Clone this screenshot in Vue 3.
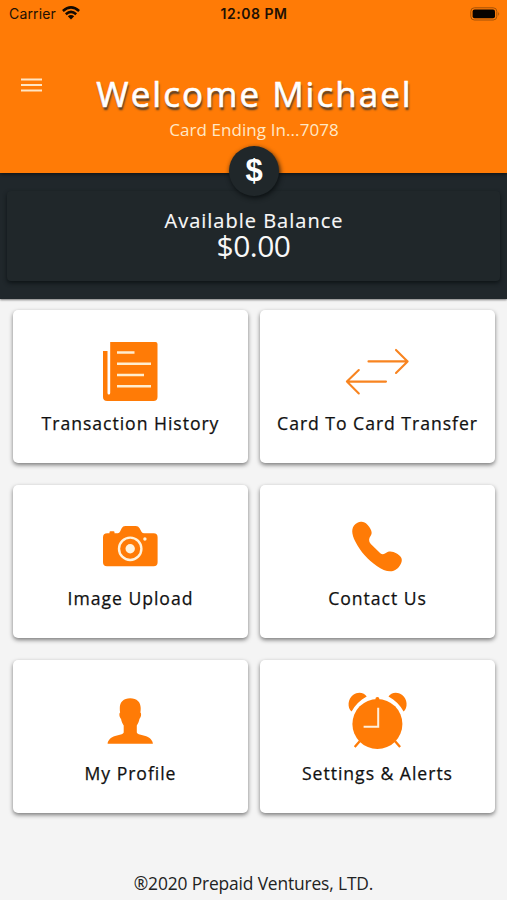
<script setup>
const tiles = [
  { id: 'history', label: 'Transaction History' },
  { id: 'transfer', label: 'Card To Card Transfer' },
  { id: 'camera', label: 'Image Upload' },
  { id: 'phone', label: 'Contact Us' },
  { id: 'profile', label: 'My Profile' },
  { id: 'alarm', label: 'Settings & Alerts' },
]
</script>

<template>
  <div class="screen">
    <header class="header">
      <div class="status">
        <div class="carrier">
          <span>Carrier</span>
          <svg class="wifi" width="18" height="14" viewBox="0 0 18 14">
            <g fill="none" stroke="#130a02" stroke-width="2.5">
              <path d="M.9 5Q9-2.2 17.1 5" />
              <path d="M3.8 8.200Q9 3.600 14.200 8.200" />
            </g>
            <path d="M5.800 10.300Q9 7.600 12.200 10.300L9 13.600Z" fill="#130a02" />
          </svg>
        </div>
        <span class="time">12:08 PM</span>
        <svg class="battery" width="31" height="14" viewBox="0 0 31 14">
          <rect x=".8" y=".8" width="26" height="12.2" rx="3.6" fill="none" stroke="#a45208" />
          <rect x="2.6" y="2.5" width="22.4" height="8.8" rx="2" fill="#090300" />
          <path d="M28.3 4.8q1.800 2.100 0 4.200z" fill="#9a4c06" />
        </svg>
      </div>
      <div class="welcome">
        <svg class="menu" width="21" height="14" viewBox="0 0 21 14">
          <path d="M0 1.500h21M0 7h21M0 12.500h21" stroke="#ffe5c4" stroke-width="2.100" />
        </svg>
        <h1>Welcome Michael</h1>
      </div>
      <p class="ending">Card Ending In...7078</p>
      <div class="dollar">$</div>
    </header>

    <section class="balance">
      <div class="panel">
        <span class="balance-label">Available Balance</span>
        <span class="amount">$0.00</span>
      </div>
    </section>

    <main class="grid">
      <div v-for="tile in tiles" :key="tile.id" class="tile">
        <svg class="icon" width="80" height="80" viewBox="0 0 80 80">
          <template v-if="tile.id === 'history'">
            <path d="M20.200 12H65.500q2 0 2 2v53q0 4-4 4H17.200q-4.200 0-4.200-4V21h4.500v42q0 1.500 1.350 1.500t1.350-1.500Z" fill="#ff7b06" />
            <path d="M27 22.500h17.500M27 33.800h34M27 45h27M27 56.300h34" stroke="#ffedcf" stroke-width="2.400" />
          </template>
          <g v-else-if="tile.id === 'transfer'" fill="none" stroke="#f88420" stroke-width="2.100" stroke-linecap="round" stroke-linejoin="round">
            <path d="M31.500 31.400h39.100M59 19.900l11.600 11.500L59 43M49 51.600H9.900M21.800 40 9.900 51.600l11.900 11.800" />
          </g>
          <template v-else-if="tile.id === 'camera'">
            <path d="M17.300 28.200h2.200v-1q0-1 1-1h3q1 0 1 1v1h3.300q1.500 0 2.300-1.600l1.600-3.300Q32.800 21 35.300 21h10.500q2.500 0 3.800 2.300l1.700 3.300q.8 1.600 2.500 1.600h9.800q4 0 4 4v25q0 4.100-4 4.100H17q-4 0-4-4.100v-25q0-4 4.300-4Z" fill="#ff7b06" />
            <circle cx="40.200" cy="43.800" r="11.200" fill="none" stroke="#fff2dc" stroke-width="2.400" />
            <circle cx="40.200" cy="43.800" r="4.700" fill="#fff2dc" />
            <circle cx="54.900" cy="34" r="1.700" fill="#fff2dc" />
          </template>
          <path v-else-if="tile.id === 'phone'" d="M23.800 16.700C27.500 16.200 30 18.500 32.300 22c2.200 3.500 3.300 6 1.400 8.700-2 2.600-2.300 5.400.1 8.300l9.500 9.300c1.500 1.200 3 1.400 4.700.2 3.300-2.800 7.500-2.600 11.700.1 3.300 2.200 6 4.600 4.900 8.200-1.300 4.700-5 8.700-9.600 9.400-4.800.7-9.700-1.600-15.200-5.300C31 55.100 23.500 46.600 18.300 36.500c-3.900-7.500-4.300-13.600.2-17.400 1.500-1.300 3.300-2.200 5.300-2.400Z" fill="#ff7b06" />
          <path v-else-if="tile.id === 'profile'" d="M40.200 18.200c6.700 0 10.500 3.800 10.500 9.800 0 1.500 0 3-.3 4.500 1.300.7.700 5-.9 6.300-.5 2.900-1.500 4.900-2.700 6.700v7q.4 1.200 2 1.700l6.600 1.900c4.200 1.200 7.300 4.400 7.500 7.700H17.600c.2-3.300 3.300-6.500 7.500-7.700l6.600-1.900q1.600-.5 2-1.700v-7c-1.200-1.800-2.200-3.800-2.700-6.700-1.600-1.300-2.200-5.600-.9-6.300-.3-1.500-.3-3-.3-4.500 0-6 3.700-9.800 10.400-9.800Z" fill="#ff7b06" />
          <template v-else>
            <g fill="#ff7b06">
              <circle cx="40.400" cy="44" r="25" />
              <circle cx="40.400" cy="19" r="2" />
              <path d="M14.600 31.600C10.100 27.700 10.700 18.800 16 15c5.300-3.800 11.300-2.200 13.700 1.500C23 20 18 25 14.600 31.600ZM66.600 31.600C71.100 27.700 70.500 18.800 65.200 15 59.900 11.200 53.900 12.800 51.500 16.500 58.200 20 63.200 25 66.600 31.600Z" />
            </g>
            <path d="m22.700 61.200-5 5.900m40.400-5.900 5 5.900" stroke="#ff7b06" stroke-width="2.300" />
            <path d="M41.200 27.700v19H26.600" fill="none" stroke="#ffefdc" stroke-width="2" />
          </template>
        </svg>
        <span class="label">{{ tile.label }}</span>
      </div>
    </main>

    <footer class="footer">®2020 Prepaid Ventures, LTD.</footer>
  </div>
</template>

<style>
body {
  margin: 0;
  background: #f4f4f4;
}
</style>

<style scoped>
.screen {
  width: 507px;
  height: 900px;
  overflow: hidden;
  box-sizing: border-box;
  display: flex;
  flex-direction: column;
  background: #f4f4f4;
  font-family: "Open Sans", "Noto Sans", sans-serif;
}
.header {
  position: relative;
  z-index: 1;
  height: 173px;
  flex: none;
  background: #ff7b06;
  box-shadow: 0 1px 4px #0b1012;
}
.status {
  height: 27px;
  display: grid;
  grid-template-columns: 1fr auto 1fr;
  align-items: center;
  padding: 0 6px 0 9px;
  font-family: Inter, sans-serif;
  font-size: 14px;
  color: #211004;
}
.carrier {
  display: flex;
  align-items: center;
  gap: 6px;
  letter-spacing: .15px;
}
.wifi {
  margin-top: -1px;
}
.time {
  font-weight: 600;
  font-size: 14px;
  letter-spacing: .55px;
  margin-left: -2px;
}
.battery {
  justify-self: end;
}
.welcome {
  display: grid;
  grid-template-columns: 21px 1fr 21px;
  align-items: center;
  height: 56px;
  padding: 39px 21px 0;
}
.menu {
  margin-top: -19px;
}
h1 {
  margin: 0;
  padding-left: 2px;
  text-align: center;
  white-space: nowrap;
  color: #fff;
  font-size: 35px;
  font-weight: 400;
  line-height: 46px;
  letter-spacing: 2px;
  -webkit-text-stroke: .6px #fff;
  text-shadow: 1px 3px 2px #4b3c2d;
}
.ending {
  margin: -4px 0 0;
  padding-left: 1px;
  text-align: center;
  font-size: 17px;
  line-height: 23px;
  letter-spacing: .08px;
  color: #ffe8c6;
}
.dollar {
  position: absolute;
  left: 229px;
  top: 146px;
  width: 50px;
  height: 50px;
  border-radius: 50%;
  background: #20272a;
  box-shadow: 1px 2px 5px #0b1012;
  color: #fff;
  text-align: center;
  font: 700 31px/49px "Liberation Sans", sans-serif;
}
.balance {
  height: 126px;
  flex: none;
  box-sizing: border-box;
  padding: 18px 7px;
  background: #20272b;
  box-shadow: 0 1px 2px #777;
}
.panel {
  height: 90px;
  display: flex;
  flex-direction: column;
  align-items: center;
  box-sizing: border-box;
  padding-top: 19px;
  border-radius: 4px;
  background: #20272a;
  box-shadow: 0 2px 4px #0d1316;
  color: #f8f8f8;
}
.balance-label {
  font-size: 20px;
  line-height: 22px;
  letter-spacing: 1px;
  padding-left: 1px;
  -webkit-text-stroke: .15px #f8f8f8;
}
.amount {
  font-size: 30px;
  line-height: 27px;
  letter-spacing: -.5px;
}
.grid {
  display: grid;
  grid-template-columns: 235px 235px;
  grid-auto-rows: 153px;
  gap: 22px 12px;
  padding: 11px 12px 0 13px;
}
.tile {
  box-sizing: border-box;
  display: flex;
  flex-direction: column;
  align-items: center;
  padding-top: 20px;
  border-radius: 5px;
  background: #fff;
  box-shadow: 0 2px 4px rgba(0, 0, 0, .5);
}
.icon {
  flex: none;
  margin-right: 1px;
}
.label {
  font-size: 17.6px;
  line-height: 24px;
  letter-spacing: .97px;
  -webkit-text-stroke: .25px #111;
  color: #111;
  white-space: nowrap;
  margin-top: 1px;
}
.footer {
  margin-top: 58px;
  text-align: center;
  font-size: 17.4px;
  line-height: 24px;
  letter-spacing: -.15px;
  color: #222;
}
</style>
